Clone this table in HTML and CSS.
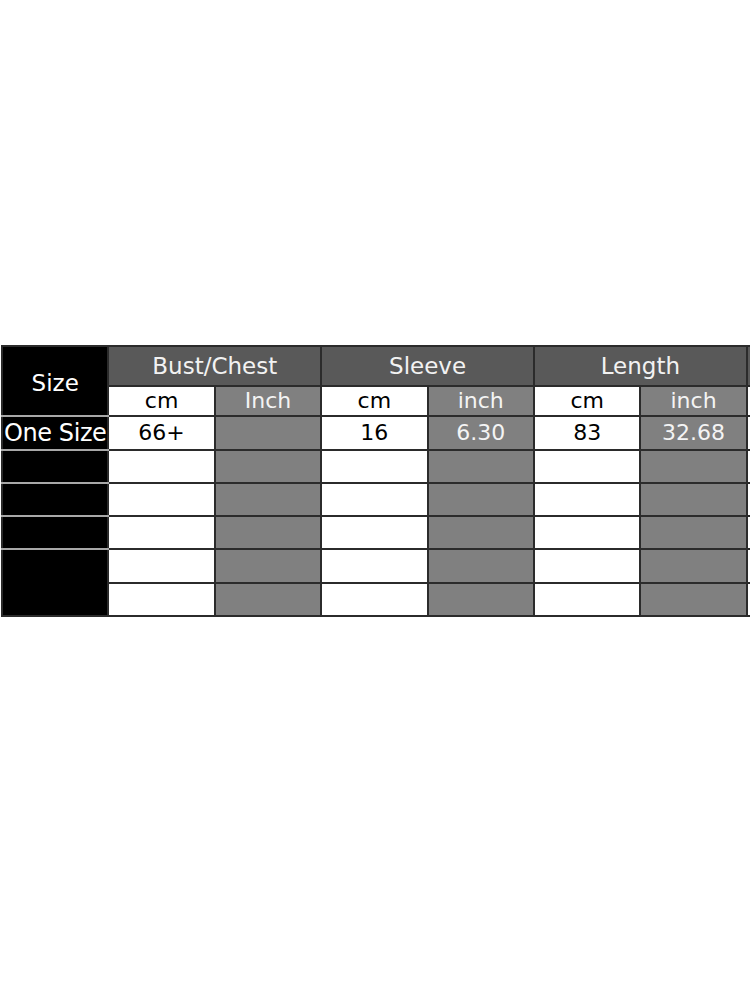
FILE: index.html
```html
<!DOCTYPE html>
<html>
<head>
<meta charset="utf-8">
<link rel="stylesheet" href="styles.css">
</head>
<body>
<div class="wrap">
<table class="size-table">
  <colgroup>
    <col class="c"><col class="c"><col class="c"><col class="c"><col class="c"><col class="c"><col class="c"><col class="c">
  </colgroup>
  <tr class="r-h1">
    <td class="size-col head-size" rowspan="2">Size</td>
    <td class="grp" colspan="2">Bust/Chest</td>
    <td class="grp" colspan="2">Sleeve</td>
    <td class="grp" colspan="2">Length</td>
    <td class="grp"></td>
  </tr>
  <tr class="r-h2">
    <td class="cm">cm</td>
    <td class="inch">Inch</td>
    <td class="cm">cm</td>
    <td class="inch">inch</td>
    <td class="cm">cm</td>
    <td class="inch">inch</td>
    <td class="cm"></td>
  </tr>
  <tr class="r-d">
    <td class="size-col one">One Size</td>
    <td class="cm">66+</td>
    <td class="inch"></td>
    <td class="cm">16</td>
    <td class="inch">6.30</td>
    <td class="cm">83</td>
    <td class="inch">32.68</td>
    <td class="cm"></td>
  </tr>
  <tr class="r-e">
    <td class="size-col"></td>
    <td class="cm"></td><td class="inch"></td><td class="cm"></td><td class="inch"></td><td class="cm"></td><td class="inch"></td><td class="cm"></td>
  </tr>
  <tr class="r-e">
    <td class="size-col"></td>
    <td class="cm"></td><td class="inch"></td><td class="cm"></td><td class="inch"></td><td class="cm"></td><td class="inch"></td><td class="cm"></td>
  </tr>
  <tr class="r-e">
    <td class="size-col"></td>
    <td class="cm"></td><td class="inch"></td><td class="cm"></td><td class="inch"></td><td class="cm"></td><td class="inch"></td><td class="cm"></td>
  </tr>
  <tr class="r-e r-tall">
    <td class="size-col last" rowspan="2"></td>
    <td class="cm"></td><td class="inch"></td><td class="cm"></td><td class="inch"></td><td class="cm"></td><td class="inch"></td><td class="cm"></td>
  </tr>
  <tr class="r-e">
    <td class="cm"></td><td class="inch"></td><td class="cm"></td><td class="inch"></td><td class="cm"></td><td class="inch"></td><td class="cm"></td>
  </tr>
</table>
</div>
</body>
</html>
```

FILE: styles.css
```css
html, body {
  margin: 0;
  padding: 0;
  background: #ffffff;
  overflow: hidden;
  width: 750px;
  height: 1000px;
}
.wrap {
  padding-top: 345px;
  padding-left: 1px;
  width: 900px;
}
.size-table {
  border-collapse: collapse;
  table-layout: fixed;
  width: 851px;
  font-family: "DejaVu Sans", Tahoma, sans-serif;
  font-size: 22px;
}
.size-table col.c {
  width: 106.4px;
}
.size-table td {
  border: 2px solid #2b2b2b;
  padding: 0;
  text-align: center;
  vertical-align: middle;
  white-space: nowrap;
  overflow: hidden;
  line-height: 1;
}
.r-h1 td { height: 38px; }
.r-h2 td { height: 28px; }
.r-d td { height: 32px; }
.r-e td { height: 31px; }
.r-tall td { height: 32px; }
.size-table .size-col {
  background: #000000;
  color: #ffffff;
  border-bottom-color: #a8a8a8;
}
.size-table .size-col.last { border-bottom-color: #2b2b2b; height: auto; }
.size-table .head-size { font-size: 23px; padding-top: 4px; }
.size-table .one { font-size: 24px; letter-spacing: -0.4px; }
.grp {
  background: #595959;
  color: #f2f2f2;
  font-size: 23px;
}
.cm {
  background: #ffffff;
  color: #000000;
}
.inch {
  background: #808080;
  color: #f4f4f4;
}
```
